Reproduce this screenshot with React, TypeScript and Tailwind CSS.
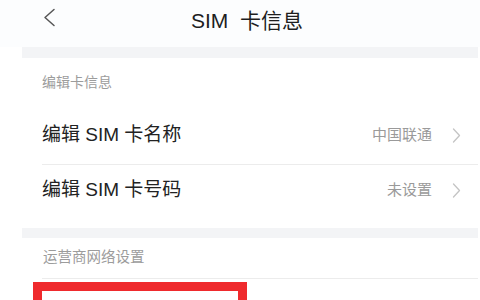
import React from "react";

const font = { fontFamily: '"Liberation Sans", "Noto Sans CJK SC", sans-serif' };

function Chevron() {
  return (
    <svg width="9" height="15" viewBox="0 0 9 15" className="ml-[20px]">
      <polyline points="1.5,1 7.5,7.5 1.5,14" fill="none" stroke="#c4c4c4" strokeWidth="1.3" strokeLinecap="round" strokeLinejoin="round" />
    </svg>
  );
}

export default function App() {
  return (
    <div className="w-[480px] h-[300px] overflow-hidden bg-white" style={font}>
      <div className="relative flex h-[47px] items-center justify-center pl-[14px] bg-[#fcfdfe]">
        <svg width="13" height="19" viewBox="0 0 13 19" className="absolute left-[43px] top-[8px]">
          <polyline points="11,1.5 2,9.5 11,17.5" fill="none" stroke="#555" strokeWidth="1.5" strokeLinecap="round" strokeLinejoin="round" />
        </svg>
        <span className="text-[21px] text-[#1e1e1e] pb-[6px]">SIM&nbsp;&nbsp;卡信息</span>
      </div>
      <div className="ml-[22px] mr-[2px] h-[11px] bg-[#f3f4f6]" />
      <div className="flex h-[48px] items-center pl-[42px] text-[14px] text-[#9c9c9c]">编辑卡信息</div>
      <div className="flex h-[58px] items-center justify-between pl-[42px] pr-[19px]">
        <span className="text-[19px] text-[#222]">编辑 SIM 卡名称</span>
        <div className="flex items-center">
          <span className="text-[15px] text-[#9a9a9a]">中国联通</span>
          <Chevron />
        </div>
      </div>
      <div className="ml-[42px] mr-[2px] h-px bg-[#ececec]" />
      <div className="flex h-[50px] items-center justify-between pl-[42px] pr-[19px]">
        <span className="text-[19px] text-[#222]">编辑 SIM 卡号码</span>
        <div className="flex items-center">
          <span className="text-[15px] text-[#9a9a9a]">未设置</span>
          <Chevron />
        </div>
      </div>
      <div className="h-[13px]" />
      <div className="ml-[22px] mr-[2px] h-[10px] bg-[#f3f4f6]" />
      <div className="flex h-[40px] items-center pl-[43px] text-[14.5px] text-[#9c9c9c]">运营商网络设置</div>
      <div className="ml-[42px] mr-[2px] h-px bg-[#ececec]" />
      <div className="ml-[33px] mt-[3px] h-[40px] w-[214px] border-[9px] border-[#ef2a2d] bg-white" />
    </div>
  );
}
